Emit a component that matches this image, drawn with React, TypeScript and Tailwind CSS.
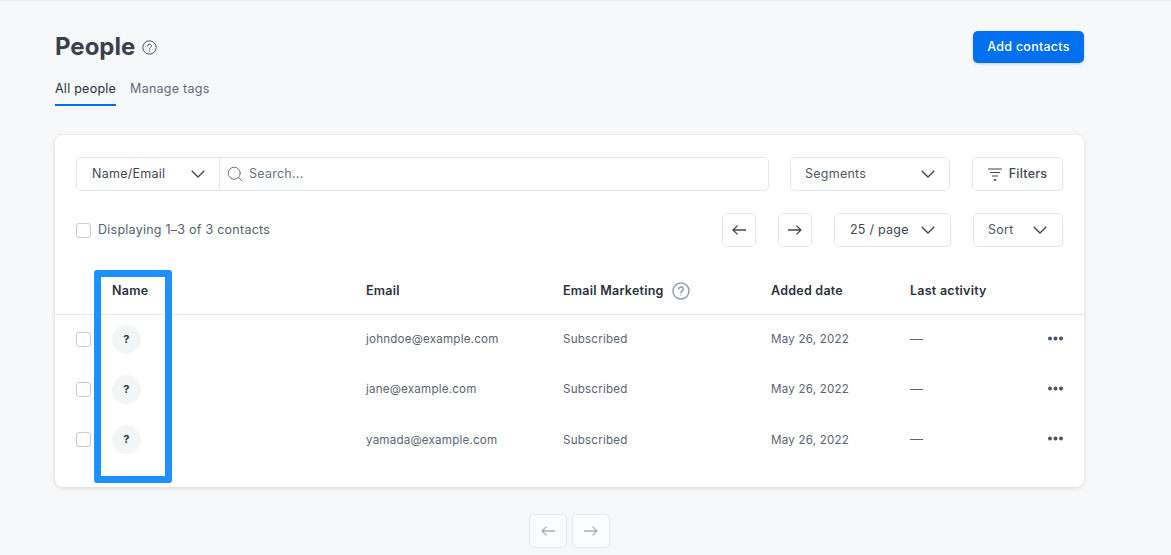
import { Search } from "lucide-react";

interface Contact {
  email: string;
  date: string;
}

const contacts: Contact[] = [
  { email: "johndoe@example.com", date: "May 26, 2022" },
  { email: "jane@example.com", date: "May 26, 2022" },
  { email: "yamada@example.com", date: "May 26, 2022" },
];

const HelpIcon = ({ className, weight }: { className: string; weight: number }) => (
  <svg viewBox="0 0 18 18" fill="none" stroke="currentColor" className={className}>
    <circle cx="9" cy="9" r="8" strokeWidth={weight} />
    <path d="M6.8 7.1a2.2 2.2 0 1 1 3.3 1.9c-.7.4-1.1.9-1.1 1.7" strokeWidth={weight} strokeLinecap="round" />
    <circle cx="9" cy="13" r=".7" fill="currentColor" stroke="none" />
  </svg>
);

const FilterIcon = () => (
  <svg viewBox="0 0 14 13" fill="none" stroke="#3f4754" strokeWidth="1.2" className="h-[13px] w-[14px]">
    <path d="M0 1h14M2 4.5h10M4 8h6" />
    <path d="M5.8 12h2.4" strokeWidth="1.6" />
  </svg>
);

const Chevron = () => (
  <svg viewBox="0 0 14 8" fill="none" stroke="#3f4754" strokeWidth="1.3" className="h-[8px] w-[14px]">
    <path d="M.7.7 7 7 13.3.7" />
  </svg>
);

const ArrowIcon = ({ dir, className }: { dir: "left" | "right"; className: string }) => (
  <svg viewBox="0 0 14 10" fill="none" stroke="currentColor" strokeWidth="1.3" className={`h-[10px] w-[14px] ${className}`}>
    {dir === "left" ? <path d="M14 5H1M5.5.6 1 5l4.5 4.4" /> : <path d="M0 5h13M8.5.6 13 5 8.5 9.4" />}
  </svg>
);

const Dots = () => (
  <svg viewBox="0 0 15 5" fill="#46556a" className="-mt-[2px] h-[5px] w-[15px]">
    <circle cx="2" cy="2.5" r="2" />
    <circle cx="7.5" cy="2.5" r="2" />
    <circle cx="13" cy="2.5" r="2" />
  </svg>
);

const Checkbox = () => <span className="block h-[15px] w-[15px] rounded-[3px] border border-[#c3cbdc] bg-white" />;

const IconButton = ({ children, className }: { children: React.ReactNode; className: string }) => (
  <button className={`flex h-[34px] items-center justify-center rounded-[5px] border border-[#e2e8f2] ${className}`}>
    {children}
  </button>
);

export default function App() {
  return (
    <div className="relative h-[555px] w-[1171px] overflow-hidden border-t border-[#eceef1] bg-[#f6f8fa] pl-[55px] pr-[87px] pt-[30px] font-['Inter',sans-serif] text-[12.5px] tracking-[0.25px] text-[#3f4754]">
      {/* Header */}
      <div className="flex items-start justify-between">
        <div className="flex items-center gap-[7px] pt-[1px]">
          <h1 className="text-[24px] leading-[30px] font-bold tracking-normal text-[#3a404b]">People</h1>
          <HelpIcon weight={1.2} className="h-[15px] w-[15px] text-[#4a5361]" />
        </div>
        <button className="h-[32px] w-[111px] rounded-[5px] bg-[#0070f0] font-medium text-white shadow-[0_1px_3px_rgba(0,0,0,0.2)]">
          Add contacts
        </button>
      </div>

      {/* Tabs */}
      <div className="mt-[18px] flex gap-[14px]">
        <div className="border-b-2 border-[#0070f0] pb-[7px] leading-[16px] text-[#2b313a]">All people</div>
        <div className="leading-[16px] text-[#5f6a7a]">Manage tags</div>
      </div>

      {/* Card */}
      <div className="mt-[29px] h-[352px] rounded-[8px] bg-white shadow-[0_1px_4px_rgba(0,0,0,0.14)]">
        <div className="flex items-center px-[21px] pt-[22px]">
          <div className="flex h-[34px] w-[693px] rounded-[5px] border border-[#e2e8f2]">
            <div className="flex w-[143px] items-center justify-between border-r border-[#e2e8f2] pl-[15px] pr-[14px]">
              <span>Name/Email</span>
              <Chevron />
            </div>
            <div className="flex items-center gap-[5px] pl-[6px] text-[#687385]">
              <Search className="h-[18px] w-[18px]" strokeWidth={1.3} />
              <span>Search...</span>
            </div>
          </div>
          <div className="ml-[21px] flex h-[34px] w-[160px] items-center justify-between rounded-[5px] border border-[#e2e8f2] pl-[14px] pr-[14px] text-[#4f5867]">
            <span>Segments</span>
            <Chevron />
          </div>
          <button className="ml-[22px] flex h-[34px] w-[91px] items-center justify-center gap-[7px] rounded-[5px] border border-[#e2e8f2] font-medium">
            <FilterIcon />
            <span>Filters</span>
          </button>
        </div>

        <div className="mt-[22px] flex items-center px-[21px]">
          <Checkbox />
          <span className="ml-[7px] text-[#56606f]">Displaying 1–3 of 3 contacts</span>
          <IconButton className="ml-auto w-[34px]">
            <ArrowIcon dir="left" className="text-[#3f4754]" />
          </IconButton>
          <IconButton className="ml-[22px] w-[34px]">
            <ArrowIcon dir="right" className="text-[#3f4754]" />
          </IconButton>
          <div className="ml-[22px] flex h-[34px] w-[117px] items-center justify-between rounded-[5px] border border-[#e2e8f2] pl-[15px] pr-[15px]">
            <span>25 / page</span>
            <Chevron />
          </div>
          <div className="ml-[22px] flex h-[34px] w-[90px] items-center justify-between rounded-[5px] border border-[#e2e8f2] pl-[14px] pr-[15px] text-[#4f5867]">
            <span>Sort</span>
            <Chevron />
          </div>
        </div>

        {/* Table */}
        <div className="mt-[22px] grid h-[46px] grid-cols-[57px_254px_197px_208px_139px_1fr] items-center border-b border-[#e2e8f2] pb-[1px] font-semibold text-[#2b313a]">
          <span className="col-start-2">Name</span>
          <span>Email</span>
          <span className="flex items-center gap-[8px]">
            Email Marketing
            <HelpIcon weight={1.5} className="h-[18px] w-[18px] text-[#8ea1b8]" />
          </span>
          <span>Added date</span>
          <span>Last activity</span>
        </div>
        <div className="-mt-[1px]">
          {contacts.map((contact) => (
            <div
              key={contact.email}
              className="grid h-[50.3px] grid-cols-[21px_36px_254px_197px_208px_139px_1fr_auto] items-center pr-[21px] text-[11.6px] tracking-[0.2px] text-[#5a6473]"
            >
              <span className="col-start-2">
                <Checkbox />
              </span>
              <span className="flex h-[29px] w-[29px] items-center justify-center rounded-full bg-[#f2f6f7] text-[11px] font-bold text-[#2b313a]">
                ?
              </span>
              <span className="pt-[1px]">{contact.email}</span>
              <span className="pt-[1px]">Subscribed</span>
              <span className="pt-[1px]">{contact.date}</span>
              <span className="pt-[1px] text-[13px]">—</span>
              <Dots />
            </div>
          ))}
        </div>
      </div>

      {/* Pager */}
      <div className="mt-[27px] flex justify-center gap-[5px]">
        <IconButton className="w-[38px] bg-white/60">
          <ArrowIcon dir="left" className="text-[#a3b0c0]" />
        </IconButton>
        <IconButton className="w-[38px] bg-white/60">
          <ArrowIcon dir="right" className="text-[#a3b0c0]" />
        </IconButton>
      </div>

      {/* Highlight annotation */}
      <div className="absolute left-[94px] top-[269px] h-[213px] w-[78px] rounded-[3px] border-[7px] border-[#1e90ff]" />
    </div>
  );
}
